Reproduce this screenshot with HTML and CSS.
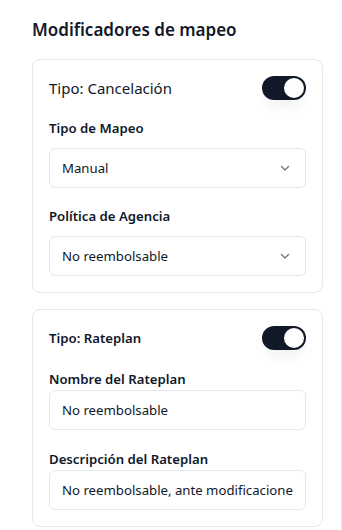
FILE: index.html
```html
<!DOCTYPE html>
<html lang="es">
<head>
<meta charset="utf-8">
<link rel="stylesheet" href="styles.css">
</head>
<body>
<div class="page">
  <h2 class="title">Modificadores de mapeo</h2>

  <section class="card">
    <div class="card-head">
      <span class="type-normal">Tipo: Cancelación</span>
      <span class="toggle"><span class="knob"></span></span>
    </div>
    <div class="field first">
      <div class="label">Tipo de Mapeo</div>
      <div class="select">
        <span>Manual</span>
        <svg class="chev" viewBox="0 0 16 16" width="16" height="16"><path d="M4.5 6.5 8 10l3.5-3.5" fill="none" stroke="#6b7280" stroke-width="1.3" stroke-linecap="round" stroke-linejoin="round"/></svg>
      </div>
    </div>
    <div class="field">
      <div class="label">Política de Agencia</div>
      <div class="select">
        <span>No reembolsable</span>
        <svg class="chev" viewBox="0 0 16 16" width="16" height="16"><path d="M4.5 6.5 8 10l3.5-3.5" fill="none" stroke="#6b7280" stroke-width="1.3" stroke-linecap="round" stroke-linejoin="round"/></svg>
      </div>
    </div>
  </section>

  <section class="card">
    <div class="card-head">
      <span class="type-bold">Tipo: Rateplan</span>
      <span class="toggle"><span class="knob"></span></span>
    </div>
    <div class="field tight first">
      <div class="label">Nombre del Rateplan</div>
      <div class="input">No reembolsable</div>
    </div>
    <div class="field tight">
      <div class="label">Descripción del Rateplan</div>
      <div class="input"><span class="clip">No reembolsable, ante modificaciones o cancelaciones</span></div>
    </div>
  </section>
</div>
<div class="side-line"></div>
</body>
</html>
```
FILE: styles.css
```css
* { box-sizing: border-box; }
html, body { margin: 0; padding: 0; background: #fff; }
body {
  font-family: "Noto Sans", "Open Sans", sans-serif;
  color: #0f172a;
  width: 342px;
  height: 530px;
  overflow: hidden;
  position: relative;
}
.page {
  padding: 16px 19px 0 32px;
}
.title {
  margin: 0 0 15px;
  font-size: 17px;
  line-height: 28px;
  font-weight: 600;
  color: #111827;
}
.card {
  border: 1px solid #e2e8f0;
  border-radius: 8px;
  padding: 16px;
  margin-bottom: 16px;
}
.card-head {
  display: flex;
  align-items: center;
  justify-content: space-between;
  height: 24px;
}
.type-normal { font-size: 15px; font-weight: 400; }
.type-bold { font-size: 13.2px; font-weight: 600; }
.toggle {
  width: 44px;
  height: 24px;
  border-radius: 12px;
  background: #111827;
  position: relative;
  box-shadow: 0 8px 14px -4px rgba(15, 23, 42, 0.08);
}
.knob {
  position: absolute;
  top: 2px;
  right: 2px;
  width: 20px;
  height: 20px;
  border-radius: 50%;
  background: #fff;
}
.field { margin-top: 16px; }
.label {
  font-size: 13.2px;
  font-weight: 600;
  line-height: 24px;
  margin-bottom: 8px;
}
.field.tight { margin-top: 19px; }
.field.tight .label { line-height: 20px; margin-bottom: 1px; }
.select, .input {
  height: 40px;
  border: 1px solid #e2e8f0;
  border-radius: 6px;
  padding: 0 12px;
  font-size: 13.2px;
  display: flex;
  align-items: center;
  white-space: nowrap;
  overflow: hidden;
}
.select { justify-content: space-between; }
.clip { display: block; overflow: hidden; min-width: 0; flex: 1; }
.chev { flex: none; }
.side-line {
  position: absolute;
  left: 341px;
  top: 200px;
  width: 1px;
  height: 330px;
  background: #e5e7eb;
}
```
